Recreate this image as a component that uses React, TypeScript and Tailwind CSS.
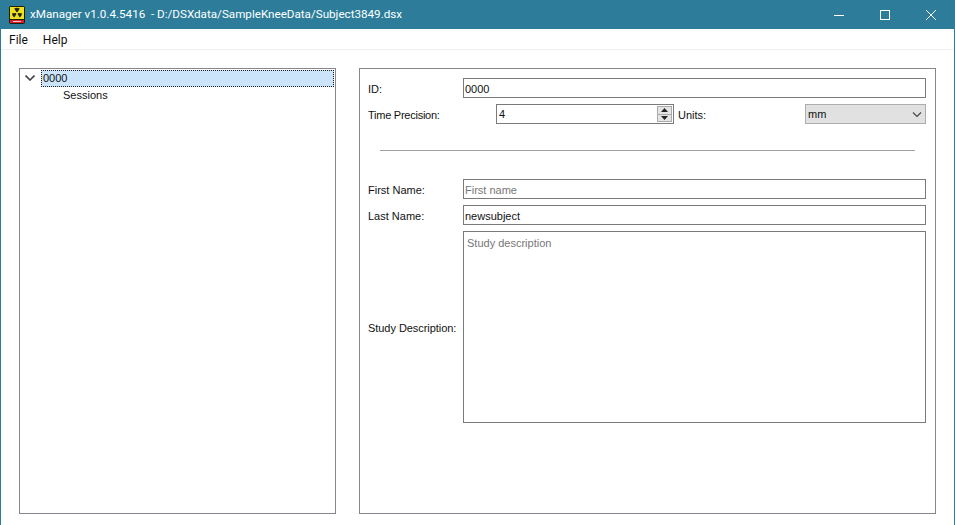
const font = "font-['Liberation_Sans','Roboto',sans-serif]";
const uiFont = "font-['Roboto','Noto_Sans',sans-serif]";

function Logo() {
  return (
    <svg width="16" height="18" viewBox="0 0 16 18" className="shrink-0">
      <rect x="0" y="0" width="16" height="18" rx="2" fill="#1e1e10" />
      <rect x="1" y="1" width="14" height="12" fill="#ece31c" />
      <path d="M8 7 L5.2 2.6 A5.2 5.2 0 0 1 10.8 2.6 Z M8 7 L13 7.2 A5 5 0 0 1 10.6 11.4 Z M8 7 L5.4 11.4 A5 5 0 0 1 3 7.2 Z" fill="#26240c" />
      <circle cx="8" cy="7" r="1" fill="#ece31c" />
      <rect x="1" y="14" width="14" height="3" fill="#d8202a" />
      <rect x="4" y="15" width="8" height="1" fill="#f6c4c4" />
    </svg>
  );
}

function Field({ label, value, placeholder }: { label: string; value?: string; placeholder?: string }) {
  return (
    <div className="flex items-center h-5">
      <span className="w-[95px] shrink-0 pt-[3px] text-[#111]">{label}</span>
      <input
        readOnly
        value={value ?? ""}
        placeholder={placeholder}
        className="h-5 flex-1 min-w-0 border border-[#7a7a7a] bg-white pl-[1px] pt-[1px] outline-none text-[#111] placeholder:text-[#777]"
      />
    </div>
  );
}

export default function App() {
  return (
    <div className={`${font} text-[11px] w-[955px] h-[525px] flex flex-col overflow-hidden bg-white border-x border-[#2d7d9a]`}>
      <header className={`${uiFont} h-[29px] shrink-0 -mx-px bg-[#2d7d9a] flex items-center pl-[9px] pr-[1px] text-white`}>
        <Logo />
        <span className="ml-[5px] text-[11.65px] whitespace-pre flex-1">xManager v1.0.4.5416  - D:/DSXdata/SampleKneeData/Subject3849.dsx</span>
        <div className="flex items-center h-full">
          <div className="w-[46px] flex justify-center">
            <svg width="10" height="10" viewBox="0 0 10 10"><path d="M0 5.5H10" stroke="#fff" fill="none" /></svg>
          </div>
          <div className="w-[46px] flex justify-center">
            <svg width="10" height="10" viewBox="0 0 10 10"><rect x="0.5" y="0.5" width="9" height="9" stroke="#fff" fill="none" /></svg>
          </div>
          <div className="w-[46px] flex justify-center">
            <svg width="10" height="10" viewBox="0 0 10 10"><path d="M0 0L10 10M10 0L0 10" stroke="#fff" fill="none" /></svg>
          </div>
        </div>
      </header>

      <nav className={`${uiFont} h-[21px] shrink-0 border-b border-[#f0f0f0] flex items-center pl-2 pt-[1px] gap-[15px] text-[12px] text-[#111]`}>
        <span>File</span>
        <span>Help</span>
      </nav>

      <main className="flex-1 flex gap-[23px] pl-[18px] pr-[18px] pt-[18px] pb-[11px] min-h-0">
        <section className="w-[317px] shrink-0 border border-[#86868e] pt-[1px] pr-[1px] text-[#111]">
          <div className="h-[17px] flex items-center">
            <svg width="10" height="6" viewBox="0 0 10 6" className="ml-[5px] mr-[6px] mb-[2px] shrink-0">
              <path d="M0.5 0.5L5 5L9.5 0.5" stroke="#444" strokeWidth="1.6" fill="none" />
            </svg>
            <div className="flex-1 h-[17px] bg-[#cce4fa] border border-dotted border-[#222] flex items-center pl-[1px] pb-[1px]">0000</div>
          </div>
          <div className="h-[17px] flex items-center pl-[43px]">Sessions</div>
        </section>

        <section className="flex-1 border border-[#86868e] pt-[9px] pl-2 pr-[9px] flex flex-col text-[#111]">
          <div className="flex flex-col gap-[6px]">
            <Field label="ID:" value="0000" />
            <div className="flex items-center h-5">
              <span className="w-[128px] shrink-0 pt-[3px] tracking-[-0.25px]">Time Precision:</span>
              <div className="w-[178px] h-5 border border-[#7a7a7a] flex items-center pl-[1px] pr-[1px] pt-[1px] shrink-0">
                <span className="flex-1 pl-[1px]">4</span>
                <div className="w-[15px] h-4 -mt-[1px] flex flex-col border border-[#aaa] bg-[#e4e4e4] divide-y divide-[#aaa]">
                  <div className="flex-1 flex items-center justify-center">
                    <svg width="7" height="4" viewBox="0 0 7 4"><path d="M3.5 0L7 4H0Z" fill="#222" /></svg>
                  </div>
                  <div className="flex-1 flex items-center justify-center">
                    <svg width="7" height="4" viewBox="0 0 7 4"><path d="M0 0H7L3.5 4Z" fill="#222" /></svg>
                  </div>
                </div>
              </div>
              <span className="w-[131px] shrink-0 pl-[4px] pt-[3px]">Units:</span>
              <div className="w-[121px] h-5 border border-[#adadad] bg-[#e1e1e1] flex items-center pl-[2px] pr-[3px] pt-[1px] shrink-0">
                <span className="flex-1">mm</span>
                <svg width="10" height="6" viewBox="0 0 10 6"><path d="M1 0.5L5 4.5L9 0.5" stroke="#444" strokeWidth="1.1" fill="none" /></svg>
              </div>
            </div>
          </div>
          <hr className="mt-[26px] ml-[12px] mr-[11px] border-t border-[#a0a0a0]" />
          <div className="mt-[28px] flex flex-col gap-[6px]">
            <Field label="First Name:" placeholder="First name" />
            <Field label="Last Name:" value="newsubject" />
            <div className="flex items-center h-[192px]">
              <span className="w-[95px] shrink-0 pt-[3px] tracking-[-0.05px]">Study Description:</span>
              <textarea
                readOnly
                placeholder="Study description"
                className="h-full flex-1 min-w-0 resize-none border border-[#7a7a7a] pl-[3px] pt-[3px] outline-none placeholder:text-[#777]"
              />
            </div>
          </div>
        </section>
      </main>
    </div>
  );
}
